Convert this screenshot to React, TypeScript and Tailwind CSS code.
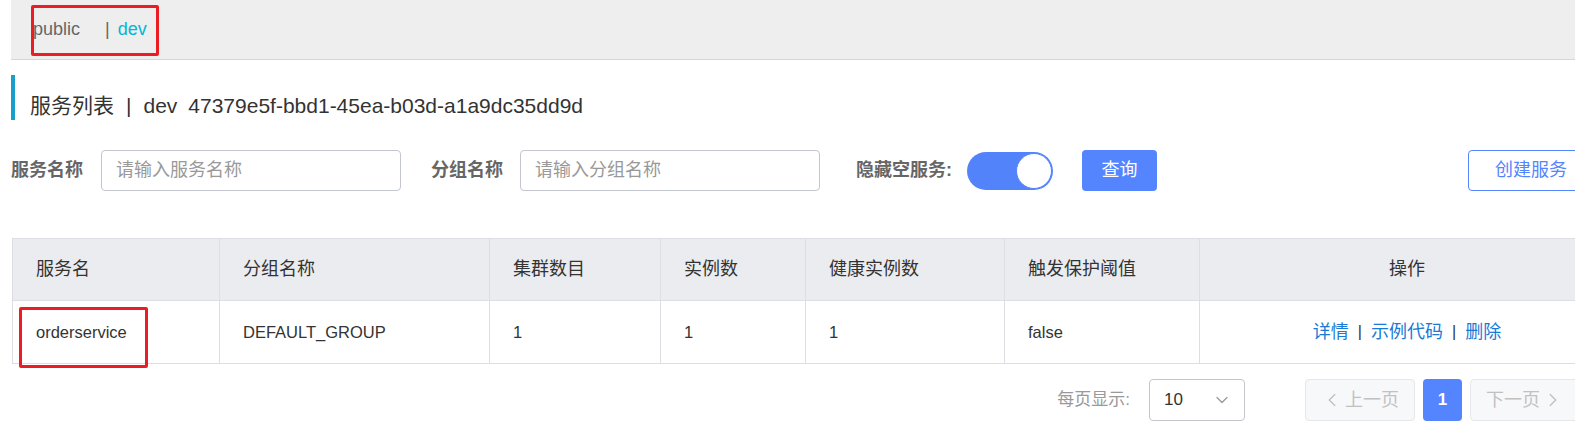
import { ChevronDown, ChevronLeft, ChevronRight } from 'lucide-react';

const columns = [
  { key: 'name', label: '服务名', width: 'w-[207px]' },
  { key: 'group', label: '分组名称', width: 'w-[270px]' },
  { key: 'clusters', label: '集群数目', width: 'w-[171px]' },
  { key: 'instances', label: '实例数', width: 'w-[145px]' },
  { key: 'healthy', label: '健康实例数', width: 'w-[199px]' },
  { key: 'threshold', label: '触发保护阈值', width: 'w-[195px]' },
];

const rows = [
  {
    name: 'orderservice',
    group: 'DEFAULT_GROUP',
    clusters: '1',
    instances: '1',
    healthy: '1',
    threshold: 'false',
  },
];

function FieldInput({ placeholder }: { placeholder: string }) {
  return (
    <input
      placeholder={placeholder}
      className="h-[41px] w-[300px] rounded-[4px] border border-[#c4c6cf] bg-white px-[14px] text-[18px] text-[#333] outline-none placeholder:text-[#999]"
    />
  );
}

export default function App() {
  return (
    <div
      className="relative h-[443px] w-[1575px] overflow-hidden bg-white text-[#333]"
      style={{ fontFamily: '"Liberation Sans", "Noto Sans CJK SC", sans-serif' }}
    >
      <div className="w-[1620px] pl-[11px]">
        {/* namespace bar */}
        <div className="relative flex h-[60px] items-center border-b border-[#d6d6d6] bg-[#eeeeee] pl-[22px] text-[18px]">
          <span className="text-[#666]">public</span>
          <span className="ml-[25px] text-[#666]">|</span>
          <span className="ml-[8px] text-[#00b7d6]">dev</span>
          <div className="pointer-events-none absolute left-[20px] top-[5px] h-[51px] w-[128px] rounded-[2px] border-[3px] border-[#ec1c24]" />
        </div>

        {/* title */}
        <div className="mt-[15px] flex h-[45px] items-end border-l-4 border-[#1a9fcb] pb-[4px] pl-[15px] text-[21px] leading-none text-[#333]">
          <span>服务列表</span>
          <span className="mx-[12px]">|</span>
          <span>dev</span>
          <span className="ml-[11px]">47379e5f-bbd1-45ea-b03d-a1a9dc35dd9d</span>
        </div>

        {/* filters */}
        <div className="mt-[30px] flex h-[41px] items-center">
          <span className="text-[18px] font-bold text-[#666]">服务名称</span>
          <div className="ml-[18px]">
            <FieldInput placeholder="请输入服务名称" />
          </div>
          <span className="ml-[30px] text-[18px] font-bold text-[#666]">分组名称</span>
          <div className="ml-[17px]">
            <FieldInput placeholder="请输入分组名称" />
          </div>
          <span className="ml-[36px] text-[18px] font-bold text-[#666]">隐藏空服务:</span>
          <div className="ml-[15px] flex h-[38px] w-[86px] shrink-0 items-center justify-end rounded-full bg-[#5283fa] pr-[1px]">
            <div className="h-[36px] w-[36px] rounded-full border border-[#5283fa] bg-white" />
          </div>
          <button className="ml-[29px] h-[41px] w-[75px] shrink-0 rounded-[4px] bg-[#5584ff] text-[18px] text-white">
            查询
          </button>
          <button className="ml-[311px] h-[41px] w-[126px] shrink-0 rounded-[4px] border border-[#5584ff] bg-white text-[18px] text-[#5584ff]">
            创建服务
          </button>
        </div>

        {/* table */}
        <div className="relative ml-[1px] mt-[47px] w-[1603px] border border-[#dcdee3]">
          <div className="flex h-[62px] items-center border-b border-[#dcdee3] bg-[#ebecf0] text-[18px]">
            {columns.map((c) => (
              <div
                key={c.key}
                className={`${c.width} flex h-full shrink-0 items-center border-r border-[#dcdee3] pl-[23px]`}
              >
                {c.label}
              </div>
            ))}
            <div className="flex h-full flex-1 items-center justify-center">操作</div>
          </div>
          {rows.map((r) => (
            <div key={r.name} className="flex h-[62px] items-center text-[16.5px]">
              {columns.map((c) => (
                <div
                  key={c.key}
                  className={`${c.width} flex h-full shrink-0 items-center border-r border-[#dcdee3] pl-[23px]`}
                >
                  {r[c.key as keyof typeof r]}
                </div>
              ))}
              <div className="flex h-full flex-1 items-center justify-center gap-[9px] text-[18px] text-[#1a7ad6]">
                <span>详情</span>
                <span className="text-[16px] text-[#333]">|</span>
                <span>示例代码</span>
                <span className="text-[16px] text-[#333]">|</span>
                <span>删除</span>
              </div>
            </div>
          ))}
          <div className="pointer-events-none absolute left-[6px] top-[68px] h-[61px] w-[129px] rounded-[2px] border-[3px] border-[#ec1c24]" />
        </div>

        {/* pagination */}
        <div className="mt-[15px] flex h-[42px] w-[1569px] items-center justify-end text-[17px]">
          <span className="text-[#999]">每页显示:</span>
          <div className="ml-[19px] flex h-[42px] w-[96px] items-center justify-between rounded-[4px] border border-[#c4c6cf] pl-[14px] pr-[12px] text-[#333]">
            <span>10</span>
            <ChevronDown className="h-[20px] w-[20px] text-[#999]" strokeWidth={1.5} />
          </div>
          <div className="ml-[60px] flex h-[42px] w-[110px] items-center justify-center gap-[2px] rounded-[4px] border border-[#e6e7eb] bg-[#f7f8fa] text-[18px] text-[#c1c1c1]">
            <ChevronLeft className="h-[22px] w-[22px]" strokeWidth={1.5} />
            <span>上一页</span>
          </div>
          <div className="ml-[8px] flex h-[42px] w-[39px] items-center justify-center rounded-[4px] bg-[#5584ff] font-bold text-white">
            1
          </div>
          <div className="ml-[8px] flex h-[42px] w-[110px] items-center justify-center gap-[2px] rounded-[4px] border border-[#e6e7eb] bg-[#f7f8fa] text-[18px] text-[#c1c1c1]">
            <span>下一页</span>
            <ChevronRight className="h-[22px] w-[22px]" strokeWidth={1.5} />
          </div>
        </div>
      </div>
    </div>
  );
}
